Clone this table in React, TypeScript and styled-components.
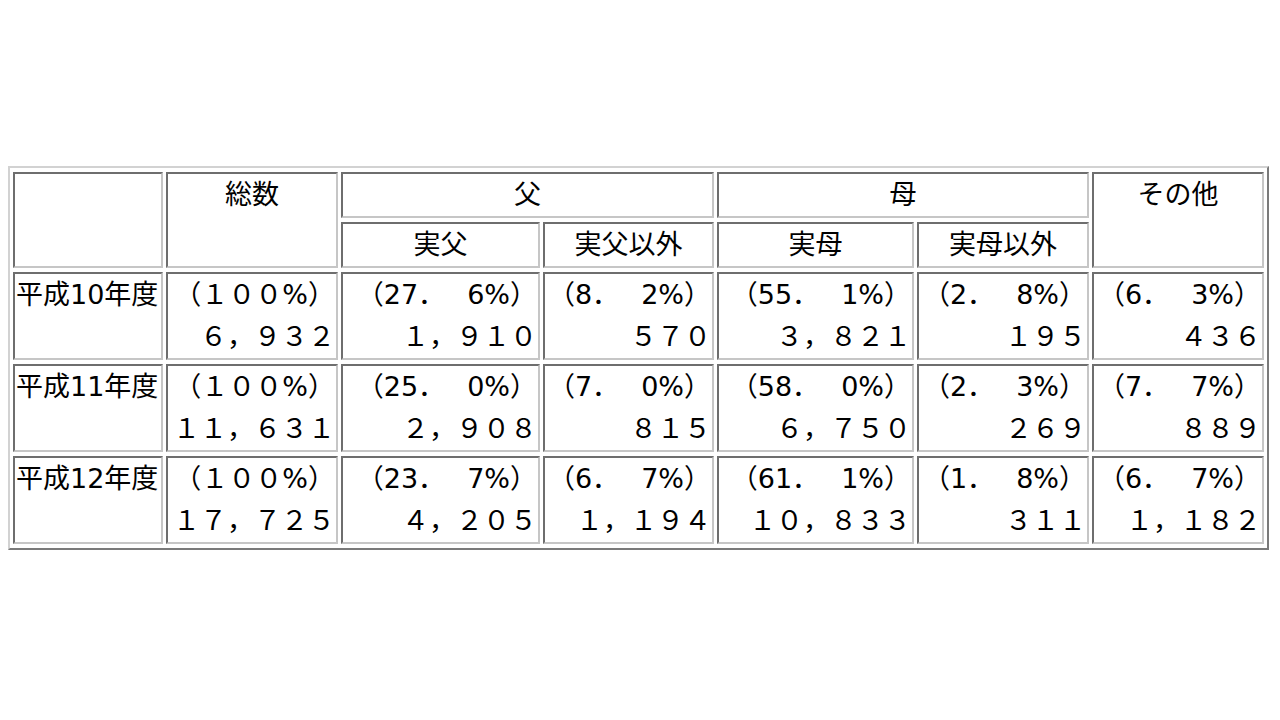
import React from "react";
import styled, { createGlobalStyle } from "styled-components";

const GlobalStyle = createGlobalStyle`
  body {
    margin: 8px;
    background: #fff;
    color: #000;
    font-family: "DejaVu Sans", "Noto Sans CJK JP", sans-serif;
  }
`;

const Page = styled.div`
  padding-top: 158px;
`;

const Table = styled.table`
  border-collapse: separate;
  border-spacing: 3px 4px;
  table-layout: fixed;
  border: 2px solid;
  border-color: #d2d2d2 #7a7a7a #7a7a7a #d2d2d2;
  font-family: "DejaVu Sans", "Noto Sans CJK JP", sans-serif;
  font-size: 27px;
  line-height: 42px;
`;

const Col = styled.col<{ $w: number }>`
  width: ${p => p.$w}px;
`;

const Cell = styled.td`
  border: 2px solid;
  border-color: #6e6e6e #c6c6c6 #c6c6c6 #6e6e6e;
  padding: 0 1px;
  text-align: right;
  vertical-align: top;
  white-space: pre;
  overflow: hidden;
`;

const HeadCell = styled(Cell)`
  text-align: center;
`;

const YearCell = styled(Cell)`
  text-align: left;
`;

const Line = styled.div``;

const widths = [150, 172, 199, 171, 197, 172, 172];

interface RowData {
  year: string;
  cells: [string, string][];
}

const rows: RowData[] = [
  {
    year: "平成10年度",
    cells: [
      ["（１００%）", "６，９３２"],
      ["（27．　 6%）", "１，９１０"],
      ["（8．　 2%）", "５７０"],
      ["（55．　 1%）", "３，８２１"],
      ["（2．　 8%）", "１９５"],
      ["（6．　 3%）", "４３６"],
    ],
  },
  {
    year: "平成11年度",
    cells: [
      ["（１００%）", "１１，６３１"],
      ["（25．　 0%）", "２，９０８"],
      ["（7．　 0%）", "８１５"],
      ["（58．　 0%）", "６，７５０"],
      ["（2．　 3%）", "２６９"],
      ["（7．　 7%）", "８８９"],
    ],
  },
  {
    year: "平成12年度",
    cells: [
      ["（１００%）", "１７，７２５"],
      ["（23．　 7%）", "４，２０５"],
      ["（6．　 7%）", "１，１９４"],
      ["（61．　 1%）", "１０，８３３"],
      ["（1．　 8%）", "３１１"],
      ["（6．　 7%）", "１，１８２"],
    ],
  },
];

export default function App() {
  return (
    <Page>
      <GlobalStyle />
      <Table>
        <colgroup>
          {widths.map((w, i) => (
            <Col key={i} $w={w} />
          ))}
        </colgroup>
        <tbody>
          <tr>
            <HeadCell rowSpan={2}></HeadCell>
            <HeadCell rowSpan={2}>総数</HeadCell>
            <HeadCell colSpan={2}>父</HeadCell>
            <HeadCell colSpan={2}>母</HeadCell>
            <HeadCell rowSpan={2}>その他</HeadCell>
          </tr>
          <tr>
            <HeadCell>実父</HeadCell>
            <HeadCell>実父以外</HeadCell>
            <HeadCell>実母</HeadCell>
            <HeadCell>実母以外</HeadCell>
          </tr>
          {rows.map(row => (
            <tr key={row.year}>
              <YearCell>{row.year}</YearCell>
              {row.cells.map(([pct, count], i) => (
                <Cell key={i}>
                  <Line>{pct}</Line>
                  <Line>{count}</Line>
                </Cell>
              ))}
            </tr>
          ))}
        </tbody>
      </Table>
    </Page>
  );
}
